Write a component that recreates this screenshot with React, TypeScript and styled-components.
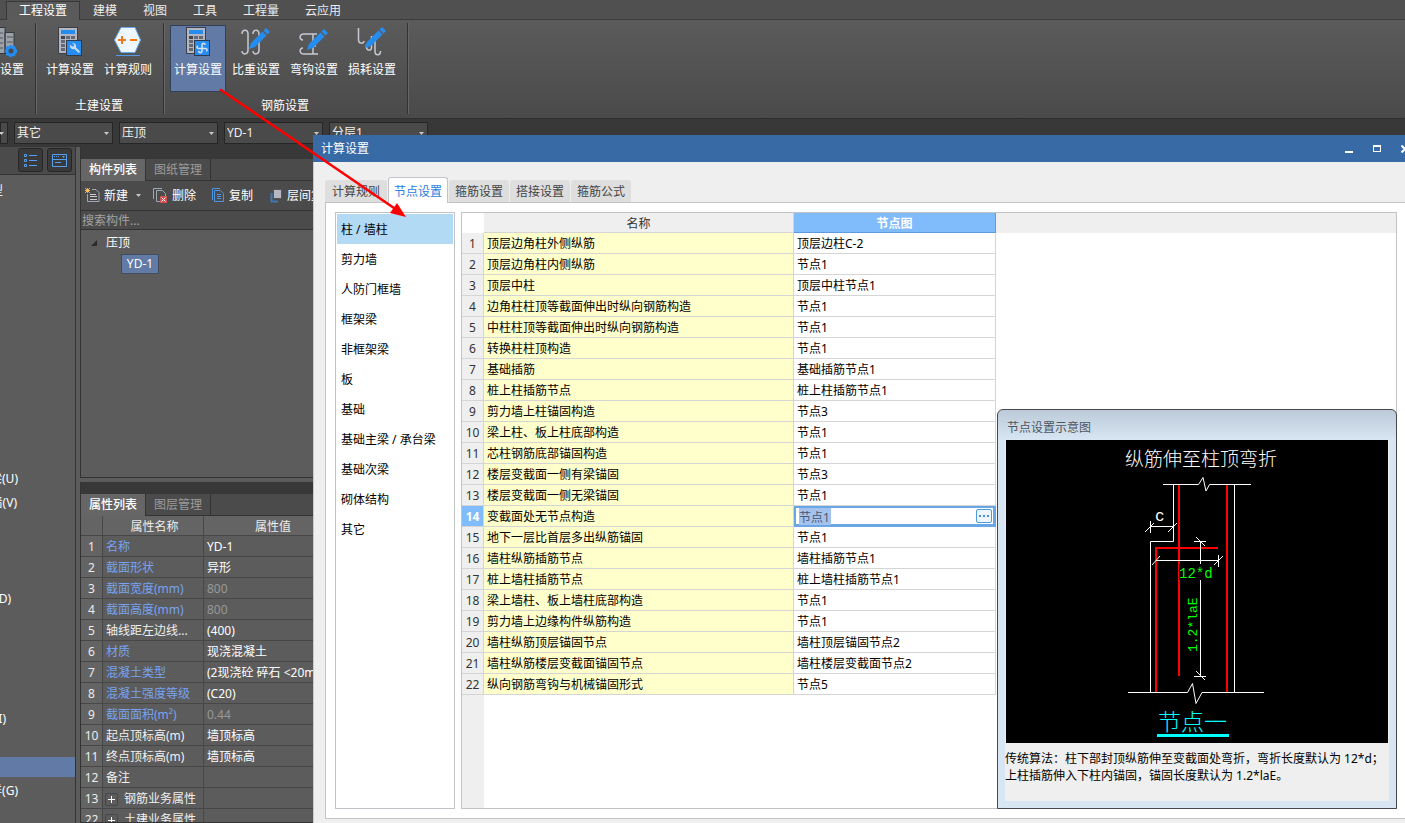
import React from "react";
import styled, { createGlobalStyle, css } from "styled-components";

const GlobalStyle = createGlobalStyle`
  *, *::before, *::after { box-sizing: border-box; }
  html, body, #root { height: 100%; }
  body {
    margin: 0;
    overflow: hidden;
    background: #3a3a3a;
    color: #fff;
    font: 12px/16px "Noto Sans", "Noto Sans CJK SC", sans-serif;
  }
  button, input, select { font: inherit; color: inherit; margin: 0; }
  button { border: 0; padding: 0; background: none; white-space: nowrap; }
  svg { display: block; flex: none; }
`;

/* ---------- main window ---------- */

const Window = styled.div`
  position: relative;
  display: flex;
  flex-direction: column;
  height: 100vh;
  overflow: hidden;
`;

const MenuBar = styled.nav`
  display: flex;
  flex: none;
  height: 20px;
  padding-left: 6px;
  background: #505050;
  border-bottom: 1px solid #3c3c3c;
`;

const MenuTab = styled.button<{ $active?: boolean }>`
  height: 20px;
  padding: 2px 13px 0;
  color: #ececec;
  ${(p) =>
    p.$active &&
    css`
      height: 19px;
      margin-top: 1px;
      padding: 0 12px;
      border: 1px solid #383838;
      border-bottom: 0;
      background: #5a5a5a;
      color: #fff;
    `}
`;

const Ribbon = styled.section`
  display: flex;
  flex: none;
  height: 98px;
  background: linear-gradient(#5b5b5b, #4a4a4a);
`;

const Group = styled.div<{ $clipped?: boolean }>`
  position: relative;
  display: flex;
  flex-direction: column;
  flex: none;
  justify-content: space-between;
  width: ${(p) => (p.$clipped ? "37px" : "auto")};
  padding: 5px 9px 4px 5px;
  ${(p) => p.$clipped && "align-items: flex-end; padding-right: 12px;"}
  &::after {
    content: "";
    position: absolute;
    right: 0;
    top: 3px;
    bottom: 4px;
    width: 2px;
    background: #333;
    border-right: 1px solid #666;
  }
`;

const GroupTools = styled.div`
  display: flex;
  gap: 2px;
`;

const GroupTitle = styled.div`
  text-align: center;
  height: 16px;
`;

const ToolButton = styled.button<{ $active?: boolean }>`
  display: flex;
  flex-direction: column;
  align-items: center;
  gap: 4px;
  width: 56px;
  height: 67px;
  border: 1px solid ${(p) => (p.$active ? "#33405a" : "transparent")};
  background: ${(p) => (p.$active ? "#627aa6" : "none")};
`;

const ClippedTool = styled(ToolButton)`
  align-items: flex-end;
  width: auto;
`;

const FilterBar = styled.div`
  display: flex;
  flex: none;
  gap: 6px;
  height: 29px;
  padding: 3px 0;
  background: #383838;
  border-top: 1px solid #2e2e2e;
`;

const Combo = styled.div<{ $stub?: boolean }>`
  position: relative;
  width: ${(p) => (p.$stub ? "8px" : "99px")};
  height: 22px;
  overflow: hidden;
  select {
    appearance: none;
    width: 100%;
    height: 22px;
    padding: 0 2px;
    border: 1px solid #262626;
    border-radius: 0;
    background: #4a4a4a;
    color: #f0f0f0;
  }
  svg {
    position: absolute;
    right: 4px;
    top: 10px;
    pointer-events: none;
  }
`;

const Workspace = styled.div`
  display: flex;
  flex: 1;
  min-height: 0;
`;

/* ---------- navigation column ---------- */

const Navigation = styled.aside`
  width: 76px;
  flex: none;
  overflow: hidden;
  background: #5c5c5c;
  border-right: 1px solid #333;
`;

const NavTools = styled.div`
  display: flex;
  justify-content: flex-end;
  gap: 4px;
  height: 28px;
  padding: 1px 3px;
  background: #4b4b4b;
  border-bottom: 1px solid #333;
`;

const NavTool = styled.button`
  display: grid;
  place-items: center;
  width: 25px;
  height: 24px;
  border: 1px solid #262626;
  border-radius: 3px;
  background: #3a3a3a;
`;

const NavList = styled.ul`
  margin: 0;
  padding: 4px 0;
  list-style: none;
`;

const NavItem = styled.li<{ $active?: boolean }>`
  height: 24px;
  padding: 2px 0;
  button {
    display: block;
    width: 100%;
    height: 20px;
    background: ${(p) => (p.$active ? "#627aa6" : "none")};
  }
`;

const NavText = styled.span<{ $end: number }>`
  display: flex;
  justify-content: flex-end;
  width: ${(p) => p.$end}px;
`;

/* ---------- component and property panels ---------- */

const Panels = styled.div`
  display: flex;
  flex-direction: column;
  width: 268px;
  flex: none;
  padding-left: 4px;
  background: #5c5c5c;
`;

const Panel = styled.section<{ $height?: number }>`
  display: flex;
  flex-direction: column;
  flex: ${(p) => (p.$height ? `0 0 ${p.$height}px` : "1")};
  min-height: 0;
  padding-top: 12px;
  border-left: 1px solid #333;
  border-bottom: 1px solid #333;
  background: #383838;
  overflow: hidden;
`;

const PanelGap = styled.div`
  height: 4px;
  flex: none;
`;

const PanelTabs = styled.div`
  display: flex;
  flex: none;
  height: 22px;
  background: #4b4b4b;
  border-bottom: 1px solid #333;
`;

const PanelTab = styled.button<{ $active?: boolean }>`
  width: 65px;
  height: 22px;
  border-right: 1px solid #333;
  color: #9b9b9b;
  ${(p) => p.$active && "background: #666; color: #fff; font-weight: 500;"}
`;

const PanelTools = styled.div`
  display: flex;
  flex: none;
  align-items: center;
  height: 30px;
  padding-left: 4px;
  background: #4b4b4b;
  border-bottom: 1px solid #333;
`;

const PanelTool = styled.button<{ $width: number }>`
  display: flex;
  align-items: center;
  flex: none;
  gap: 4px;
  width: ${(p) => p.$width}px;
  svg:last-child:not(:first-child) { margin-left: 4px; }
`;

const Search = styled.input`
  flex: none;
  width: 100%;
  height: 19px;
  padding: 0 1px;
  border: 0;
  border-bottom: 1px solid #333;
  background: #4b4b4b;
  &::placeholder { color: #a2a2a2; }
`;

const Tree = styled.div`
  flex: 1;
  padding: 2px 0 0 10px;
  background: #5c5c5c;
`;

const TreeRow = styled.div`
  display: flex;
  align-items: center;
  gap: 9px;
  height: 21px;
`;

const TreeLeaf = styled.button`
  width: 38px;
  height: 20px;
  margin-left: 30px;
  border: 1px solid #444c5c;
  background: #627aa6;
`;

const PropertyTable = styled.table`
  flex: none;
  width: 259px;
  table-layout: fixed;
  border-spacing: 0;
  background: #5c5c5c;
  tr { height: 21px; }
  th, td {
    height: 21px;
    padding: 2px 0 0 3px;
    border-right: 1px solid #474747;
    border-bottom: 1px solid #474747;
    font-weight: 400;
    text-align: left;
    white-space: nowrap;
    overflow: hidden;
    line-height: 16px;
  }
  thead th { height: 20px; text-align: center; background: #646464; color: #ececec; }
  thead tr { height: 20px; }
  tbody th { padding: 2px 0 0; text-align: center; background: #646464; color: #ececec; }
`;

const PropertyName = styled.td<{ $link?: boolean }>`
  color: ${(p) => (p.$link ? "#77a3f0" : "#f0f0f0")};
`;

const PropertyValue = styled.td<{ $muted?: boolean }>`
  color: ${(p) => (p.$muted ? "#989898" : "#fff")};
`;

const GroupCell = styled.div`
  display: flex;
  align-items: center;
  gap: 6px;
`;

const Expand = styled.button`
  display: grid;
  place-items: center;
  width: 13px;
  height: 13px;
  margin-left: -1px;
  border: 1px solid #474747;
  border-radius: 2px;
`;

/* ---------- dialog ---------- */

const Dialog = styled.section`
  position: absolute;
  top: 135px;
  left: 313px;
  right: 0;
  bottom: 0;
  display: flex;
  flex-direction: column;
  overflow: hidden;
  background: #efefef;
  color: #000;
`;

const TitleBar = styled.header`
  display: flex;
  flex: none;
  align-items: center;
  height: 27px;
  padding-left: 8px;
  background: #386aa5;
  color: #fff;
`;

const WindowButtons = styled.div`
  display: flex;
  margin: 0 -14px 0 auto;
  button { display: grid; place-items: center; width: 28px; height: 27px; }
`;

const DialogBody = styled.div`
  display: flex;
  flex: 1;
  flex-direction: column;
  min-height: 0;
  padding: 15px 0 4px 11px;
  border-left: 1px solid #c3cad3;
`;

const DialogTabs = styled.div`
  display: flex;
  flex: none;
  align-items: flex-end;
  gap: 1px;
  height: 26px;
  margin-bottom: -1px;
`;

const DialogTab = styled.button<{ $active?: boolean }>`
  width: 60px;
  height: 22px;
  margin-bottom: 1px;
  padding-top: 2px;
  border-radius: 3px 3px 0 0;
  background: #dedede;
  color: #444;
  &:first-child { width: 62px; }
  ${(p) =>
    p.$active &&
    css`
      position: relative;
      height: 26px;
      margin-bottom: 0;
      border: 1px solid #c1c3c9;
      border-bottom: 0;
      background: #fff;
      color: #2a7de1;
    `}
`;

const Page = styled.div`
  display: flex;
  flex: 1;
  gap: 6px;
  min-height: 0;
  padding: 9px 8px 9px 9px;
  border: 1px solid #c1c3c9;
  border-right: 0;
  background: #fff;
`;

const Categories = styled.ul`
  width: 120px;
  flex: none;
  margin: 0;
  padding: 1px;
  border: 1px solid #c1c3c9;
  list-style: none;
`;

const Category = styled.button<{ $active?: boolean }>`
  display: block;
  width: 100%;
  height: 30px;
  padding: 2px 0 0 4px;
  text-align: left;
  background: ${(p) => (p.$active ? "#b3daf5" : "none")};
`;

const Sheet = styled.div`
  position: relative;
  flex: 1;
  min-width: 0;
  border: 1px solid #c3c3c3;
  background:
    linear-gradient(#efefef, #efefef) 22px 0 / 100% 20px no-repeat,
    linear-gradient(#fff, #fff) 0 0 / 22px 20px no-repeat,
    linear-gradient(#efefef, #efefef) 0 0 / 22px 100% no-repeat,
    #fff;
`;

const NodeTable = styled.table`
  width: 534px;
  table-layout: fixed;
  border-spacing: 0;
  tr { height: 21px; }
  thead tr { height: 20px; }
  th, td {
    height: 21px;
    padding: 2px 3px 0;
    border-right: 1px solid #d5d5d5;
    border-bottom: 1px solid #d5d5d5;
    font-weight: 400;
    text-align: left;
    white-space: nowrap;
  }
  thead th { height: 20px; text-align: center; color: #333; }
  thead td { height: 20px; border: 0; }
`;

const ActiveHead = styled.th`
  && { background: #80bbfb; border-color: #5c9be0; color: #fff; font-weight: 700; }
`;

const RowNumber = styled.th<{ $active?: boolean }>`
  && {
    padding: 2px 0 0;
    text-align: center;
    color: ${(p) => (p.$active ? "#fff" : "#333")};
    font-weight: ${(p) => (p.$active ? 700 : 400)};
    background: ${(p) => (p.$active ? "#80bbfb" : "#efefef")};
  }
`;

const NodeName = styled.td`
  background: #ffffcc;
`;

const EditCell = styled.td`
  && { padding: 0 3px 0 5px; box-shadow: inset 0 0 0 2px #68a6e6; border-color: #68a6e6; }
`;

const EditLine = styled.div`
  display: flex;
  align-items: center;
  justify-content: space-between;
  input {
    width: 32px;
    height: 17px;
    padding: 1px 0 0;
    border: 0;
    outline: 0;
    background: #a4c2ee;
    color: #4c5870;
  }
  button {
    display: grid;
    place-items: center;
    width: 16px;
    height: 14px;
    border: 1px solid #4b9be3;
    border-radius: 2px;
    background: #eef5fc;
  }
`;

const Preview = styled.aside`
  position: absolute;
  right: -1px;
  bottom: -1px;
  display: flex;
  flex-direction: column;
  width: 400px;
  height: 400px;
  padding: 0 7px 7px;
  border: 1px solid #45494f;
  border-radius: 6px 6px 0 0;
  background: linear-gradient(#bccad9, #d8e5f2 30px);
`;

const PreviewTitle = styled.h2`
  flex: none;
  height: 30px;
  margin: 0;
  padding: 10px 2px 0;
  color: #4b5663;
  font: inherit;
`;

const PreviewBody = styled.div`
  flex: 1;
  background: #efefef;
  svg { margin-left: 1px; }
  p { margin: 7px 0 0; line-height: 17px; white-space: nowrap; }
`;

const Callout = styled.svg`
  position: absolute;
  left: 0;
  top: 0;
  pointer-events: none;
`;

/* ---------- icons ---------- */

const Caret = () => (
  <svg width="5" height="3" viewBox="0 0 5 3">
    <path d="M0 0h5L2.500 3z" fill="#c8c8c8" />
  </svg>
);

const Calculator = ({ children }: { children: React.ReactNode }) => (
  <svg width="32" height="32" viewBox="0 0 32 32">
    <rect x="4.500" y="1.500" width="19" height="26" fill="#b4b7c1" stroke="#3a3f49" />
    <rect x="7" y="4" width="14" height="4" fill="#258cf0" />
    <path d="M7 10h4v3H7z" fill="#3f444e" />
    <path d="M12 10h4v3h-4zM17 10h4v3h-4zM7 14h4v3H7zM7 18h4v3H7zM7 22h4v3H7z" fill="#646974" />
    <rect x="12.500" y="14.500" width="15" height="15" fill="#258cf0" stroke="#303a4a" />
    {children}
  </svg>
);

const CalcWrench = () => (
  <Calculator>
    <path d="M18 17a3.500 3.500 0 0 1 4 4.500l3.500 3.500c1 1-.5 2.500-1.500 1.500L20.500 23a3.500 3.500 0 0 1-4.500-4.500l2 2 1.800-.3.200-1.700z" fill="#c9daee" />
  </Calculator>
);

const CalcHook = () => (
  <Calculator>
    <path d="M23 19c0-2.500-3-2.500-3 0v5.500c0 3-3 2.500-3.500.5M16 20c-1.500.5-1.500 2.500.5 2.500h7c2 0 2 2.500.5 2.500" fill="none" stroke="#d3e1f3" strokeWidth="1.500" />
  </Calculator>
);

const Rules = () => (
  <svg width="32" height="32" viewBox="0 0 32 32">
    <path d="M9 1.500h14l5.500 12.500L23 26.500H9L2.500 14z" fill="#eef6ff" stroke="#69a9ee" />
    <path d="M6 14h8M10 10v8M18 14h7" stroke="#f07818" strokeWidth="2" />
    <path d="M4 29.500h24" stroke="#4e9bea" />
  </svg>
);

const Pencil = ({ x = 0, y = 0 }: { x?: number; y?: number }) => (
  <g transform={`translate(${x} ${y})`} fill="#258cf0">
    <path d="M0 22l2-6L13.500 4.500l4 4L6 20z" />
    <path d="M14.500 3.500L17 1l4 4-2.500 2.500z" />
  </g>
);

const Ratio = () => (
  <svg width="32" height="32" viewBox="0 0 32 32">
    <path d="M2 8c0-5 6-5 6 0v16c0 5-6 5-6 1M13 8c0-5 6-5 6 0v16c0 5-6 5-6 1" fill="none" stroke="#c6cad2" strokeWidth="1.500" />
    <Pencil x={9} y={1} />
  </svg>
);

const Hook = () => (
  <svg width="32" height="32" viewBox="0 0 32 32">
    <path d="M19 8H6c-5 0-5 6-1 6M19 28H6c-5 0-5-6-1-6M12 28h8M15 8v20M12 20h6" fill="none" stroke="#c6cad2" strokeWidth="1.500" />
    <Pencil x={9} y={2} />
  </svg>
);

const Loss = () => (
  <svg width="32" height="32" viewBox="0 0 32 32">
    <path d="M2.500 2v12c0 4 5.500 4 5.500 1M10.500 18v3c0 4 5 4 5 1V10M19 15v10c0 5 5.500 5 5.500 0" fill="none" stroke="#c6cad2" strokeWidth="1.500" />
    <Pencil x={9} y={0} />
  </svg>
);

const BuildingGear = () => (
  <svg width="24" height="32" viewBox="2 0 24 32">
    <path d="M0 1.500h7v26H0zM7 6.500h9v21H7z" fill="#9da1aa" stroke="#343840" />
    <path d="M0 7h5M0 12h5M0 17h5M0 22h5M9 11h6M9 16h6" stroke="#50555e" />
    <circle cx="13" cy="25" r="4" fill="#4a4a4a" stroke="#258cf0" strokeWidth="3" />
    <circle cx="13" cy="25" r="5.500" fill="none" stroke="#258cf0" strokeWidth="1.500" strokeDasharray="2 2" />
  </svg>
);

const ListIcon = () => (
  <svg width="13" height="13" viewBox="0 0 13 13" fill="none" stroke="#55a0f0">
    <path d="M.5.500h2v2h-2zM.5 5.500h2v2h-2zM.5 10.500h2v2h-2zM5 1.500h8M5 6.500h8M5 11.500h8" />
  </svg>
);

const FormIcon = () => (
  <svg width="15" height="13" viewBox="0 0 15 13" fill="none" stroke="#55a0f0">
    <path d="M.5.500h14v12H.5zM.5 5.500h14M3 8.500h6M2 2.500h1M4 2.500h1M6 2.500h1" />
    <path d="M10 2h3l-1.500 2z" fill="#55a0f0" stroke="none" />
  </svg>
);

const NewIcon = () => (
  <svg width="15" height="15" viewBox="0 0 15 15" fill="none">
    <path d="M7 1.500h4l3 3v9H2.500V6" stroke="#9da8b4" />
    <path d="M5 6.500h6M5 8.500h7M5 11.500h7" stroke="#c9ccd0" />
    <path d="M0 .5h5M0 2.500h5M0 4.500h5M2.500 0v5" stroke="#f2a83a" strokeDasharray="1 1" />
    <path d="M1 1h3v3H1z" fill="#f8c060" />
  </svg>
);

const DeleteIcon = () => (
  <svg width="15" height="15" viewBox="0 0 15 15" fill="none">
    <path d="M.5 11V.5H9M3.500 13.500v-11h6l3 3V8M3.500 13.500H7" stroke="#9da8b4" />
    <path d="M7 8h7v7H7z" fill="#d05050" />
    <path d="M8.500 9.500l4 4M12.500 9.500l-4 4" stroke="#fff" />
  </svg>
);

const CopyIcon = () => (
  <svg width="13" height="15" viewBox="0 0 13 15" fill="none" stroke="#4e94e0">
    <path d="M.5 12V.5H8M2.500 2.500h6l3 3v8h-9z" />
    <path d="M5 6.500h4M5 8.500h4M5 10.500h4" />
  </svg>
);

const LayerIcon = () => (
  <svg width="13" height="15" viewBox="0 0 13 15">
    <path d="M1.500 5v8.500H8" fill="none" stroke="#3c78b8" strokeWidth="2" />
    <path d="M3.500 1.500h8v9h-8z" fill="#b5b8c2" stroke="#555" />
  </svg>
);

/* ---------- node drawing ---------- */

const NodeDrawing = () => (
  <svg width="382" height="303" viewBox="0 0 382 303" role="img" aria-label="纵筋伸至柱顶弯折">
    <rect width="382" height="303" fill="#000" />
    <text x="119" y="26" fontSize="19" fontWeight="300" fill="#fff">纵筋伸至柱顶弯折</text>
    <g fill="none" stroke="#ff0000" strokeWidth="2">
      <path d="M173 44v192M221 44v208M150 252V108h62" />
    </g>
    <g fill="none" stroke="#fff">
      <path d="M157 44.500h35.500l4.500-7 3 13.500 3.500-6.500H245" />
      <path d="M167.500 44.500v57h-23v151M228.500 44.500v208" />
      <path d="M122 252.500h59.500l5-9 3.500 20 6-11h62" />
      <path d="M144.500 86.500h23M144.500 81v12M139 92l9-9M162 92l9-9" />
      <path d="M150 120.500h63M212.500 115v12M146 125l8-9M208 125l9-9" />
      <path d="M194.500 101v23M194.500 140v96M188 101.500h12M190 97l9 9M188 236.500h12M190 231l9 9" />
    </g>
    <rect x="173" y="124" width="33" height="16" fill="#000" />
    <g fontFamily="Liberation Mono, monospace" fontSize="14" fill="#00ff00">
      <text x="173" y="138">12*d</text>
      <text transform="translate(191 212) rotate(-90)" fontSize="13">1.2*laE</text>
      <text x="149" y="81" fontSize="16" fill="#fff">c</text>
    </g>
    <text x="152" y="290" fontSize="23" fontWeight="300" fill="#00ffff">节点一</text>
    <rect x="151" y="294" width="72" height="3" fill="#00ffff" />
  </svg>
);

/* ---------- data ---------- */

const menus = ["工程设置", "建模", "视图", "工具", "工程量", "云应用"];

const navLabels: Record<number, [string, number]> = {
  0: ["型", 3],
  12: ["梁(U)", 18],
  13: ["墙(V)", 17],
  17: ["(D)", 11],
  22: ["(I)", 6],
  24: ["", 0],
  25: ["洋(G)", 18],
};

type Property = { no: number; name: string; value?: string; link?: boolean; muted?: boolean; group?: boolean };

const properties: Property[] = [
  { no: 1, name: "名称", value: "YD-1", link: true },
  { no: 2, name: "截面形状", value: "异形", link: true },
  { no: 3, name: "截面宽度(mm)", value: "800", link: true, muted: true },
  { no: 4, name: "截面高度(mm)", value: "800", link: true, muted: true },
  { no: 5, name: "轴线距左边线...", value: "(400)" },
  { no: 6, name: "材质", value: "现浇混凝土", link: true },
  { no: 7, name: "混凝土类型", value: "(2现浇砼 碎石 <20mm)", link: true },
  { no: 8, name: "混凝土强度等级", value: "(C20)", link: true },
  { no: 9, name: "截面面积(m²)", value: "0.44", link: true, muted: true },
  { no: 10, name: "起点顶标高(m)", value: "墙顶标高" },
  { no: 11, name: "终点顶标高(m)", value: "墙顶标高" },
  { no: 12, name: "备注" },
  { no: 13, name: "钢筋业务属性", group: true },
  { no: 22, name: "土建业务属性", group: true },
];

const dialogTabs = ["计算规则", "节点设置", "箍筋设置", "搭接设置", "箍筋公式"];

const categories = [
  "柱 / 墙柱", "剪力墙", "人防门框墙", "框架梁", "非框架梁", "板",
  "基础", "基础主梁 / 承台梁", "基础次梁", "砌体结构", "其它",
];

const nodes: [string, string][] = [
  ["顶层边角柱外侧纵筋", "顶层边柱C-2"],
  ["顶层边角柱内侧纵筋", "节点1"],
  ["顶层中柱", "顶层中柱节点1"],
  ["边角柱柱顶等截面伸出时纵向钢筋构造", "节点1"],
  ["中柱柱顶等截面伸出时纵向钢筋构造", "节点1"],
  ["转换柱柱顶构造", "节点1"],
  ["基础插筋", "基础插筋节点1"],
  ["桩上柱插筋节点", "桩上柱插筋节点1"],
  ["剪力墙上柱锚固构造", "节点3"],
  ["梁上柱、板上柱底部构造", "节点1"],
  ["芯柱钢筋底部锚固构造", "节点1"],
  ["楼层变截面一侧有梁锚固", "节点3"],
  ["楼层变截面一侧无梁锚固", "节点1"],
  ["变截面处无节点构造", "节点1"],
  ["地下一层比首层多出纵筋锚固", "节点1"],
  ["墙柱纵筋插筋节点", "墙柱插筋节点1"],
  ["桩上墙柱插筋节点", "桩上墙柱插筋节点1"],
  ["梁上墙柱、板上墙柱底部构造", "节点1"],
  ["剪力墙上边缘构件纵筋构造", "节点1"],
  ["墙柱纵筋顶层锚固节点", "墙柱顶层锚固节点2"],
  ["墙柱纵筋楼层变截面锚固节点", "墙柱楼层变截面节点2"],
  ["纵向钢筋弯钩与机械锚固形式", "节点5"],
];

const ACTIVE_ROW = 13;

function Filter({ label, value, stub }: { label: string; value: string; stub?: boolean }) {
  return (
    <Combo $stub={stub}>
      <select aria-label={label} defaultValue={value}>
        <option>{value}</option>
      </select>
      <Caret />
    </Combo>
  );
}

function SettingsDialog() {
  return (
    <Dialog role="dialog" aria-label="计算设置">
      <TitleBar>
        计算设置
        <WindowButtons>
          <button aria-label="最小化">
            <svg width="8" height="8" viewBox="0 0 8 8"><path d="M0 6h8v2H0z" fill="#fff" /></svg>
          </button>
          <button aria-label="最大化">
            <svg width="8" height="8" viewBox="0 0 8 8"><path d="M0 0h8v7H0zM1 2v4h6V2z" fill="#fff" fillRule="evenodd" /></svg>
          </button>
          <button aria-label="关闭">
            <svg width="8" height="8" viewBox="0 0 8 8"><path d="M.5.500l7 7M7.500.5l-7 7" stroke="#fff" strokeWidth="2" /></svg>
          </button>
        </WindowButtons>
      </TitleBar>
      <DialogBody>
        <DialogTabs role="tablist">
          {dialogTabs.map((t, i) => (
            <DialogTab key={t} role="tab" aria-selected={i === 1} $active={i === 1}>{t}</DialogTab>
          ))}
        </DialogTabs>
        <Page>
          <Categories>
            {categories.map((c, i) => (
              <li key={c}><Category $active={i === 0}>{c}</Category></li>
            ))}
          </Categories>
          <Sheet>
            <NodeTable>
              <colgroup>
                <col style={{ width: 22 }} />
                <col style={{ width: 310 }} />
                <col style={{ width: 202 }} />
              </colgroup>
              <thead>
                <tr>
                  <td />
                  <th scope="col">名称</th>
                  <ActiveHead scope="col">节点图</ActiveHead>
                </tr>
              </thead>
              <tbody>
                {nodes.map(([name, value], i) => (
                  <tr key={name}>
                    <RowNumber scope="row" $active={i === ACTIVE_ROW}>{i + 1}</RowNumber>
                    <NodeName>{name}</NodeName>
                    {i === ACTIVE_ROW ? (
                      <EditCell>
                        <EditLine>
                          <input aria-label={name} defaultValue={value} />
                          <button aria-label="选择节点">
                            <svg width="10" height="2" viewBox="0 0 10 2"><path d="M0 0h2v2H0zM4 0h2v2H4zM8 0h2v2H8z" fill="#3f8fdc" /></svg>
                          </button>
                        </EditLine>
                      </EditCell>
                    ) : (
                      <td>{value}</td>
                    )}
                  </tr>
                ))}
              </tbody>
            </NodeTable>
            <Preview>
              <PreviewTitle>节点设置示意图</PreviewTitle>
              <PreviewBody>
                <NodeDrawing />
                <p>
                  传统算法：柱下部封顶纵筋伸至变截面处弯折，弯折长度默认为 12*d；
                  <br />
                  上柱插筋伸入下柱内锚固，锚固长度默认为 1.2*laE。
                </p>
              </PreviewBody>
            </Preview>
          </Sheet>
        </Page>
      </DialogBody>
    </Dialog>
  );
}

export default function App() {
  return (
    <Window>
      <GlobalStyle />
      <MenuBar>
        {menus.map((m, i) => (
          <MenuTab key={m} $active={i === 0}>{m}</MenuTab>
        ))}
      </MenuBar>
      <Ribbon>
        <Group $clipped>
          <ClippedTool><BuildingGear />设置</ClippedTool>
        </Group>
        <Group>
          <GroupTools>
            <ToolButton><CalcWrench />计算设置</ToolButton>
            <ToolButton><Rules />计算规则</ToolButton>
          </GroupTools>
          <GroupTitle>土建设置</GroupTitle>
        </Group>
        <Group>
          <GroupTools>
            <ToolButton $active><CalcHook />计算设置</ToolButton>
            <ToolButton><Ratio />比重设置</ToolButton>
            <ToolButton><Hook />弯钩设置</ToolButton>
            <ToolButton><Loss />损耗设置</ToolButton>
          </GroupTools>
          <GroupTitle>钢筋设置</GroupTitle>
        </Group>
      </Ribbon>
      <FilterBar>
        <Filter label="楼层" value="" stub />
        <Filter label="构件类别" value="其它" />
        <Filter label="构件类型" value="压顶" />
        <Filter label="构件" value="YD-1" />
        <Filter label="分层" value="分层1" />
      </FilterBar>
      <Workspace>
        <Navigation>
          <NavTools>
            <NavTool aria-label="列表"><ListIcon /></NavTool>
            <NavTool aria-label="窗体"><FormIcon /></NavTool>
          </NavTools>
          <NavList>
            {Array.from({ length: 27 }, (_, i) => {
              const label = navLabels[i];
              return (
                <NavItem key={i} $active={i === 24}>
                  {label && <button aria-label={label[0] || "当前构件"}><NavText $end={label[1]}>{label[0]}</NavText></button>}
                </NavItem>
              );
            })}
          </NavList>
        </Navigation>
        <Panels>
          <Panel $height={331}>
            <PanelTabs>
              <PanelTab $active>构件列表</PanelTab>
              <PanelTab>图纸管理</PanelTab>
            </PanelTabs>
            <PanelTools>
              <PanelTool $width={68}><NewIcon />新建<Caret /></PanelTool>
              <PanelTool $width={59}><DeleteIcon />删除</PanelTool>
              <PanelTool $width={58}><CopyIcon />复制</PanelTool>
              <PanelTool $width={66}><LayerIcon />层间复制</PanelTool>
            </PanelTools>
            <Search aria-label="搜索构件" placeholder="搜索构件..." />
            <Tree>
              <TreeRow>
                <svg width="6" height="6" viewBox="0 0 6 6"><path d="M6 0v6H0z" fill="#2b2b2b" /></svg>
                压顶
              </TreeRow>
              <TreeRow><TreeLeaf>YD-1</TreeLeaf></TreeRow>
            </Tree>
          </Panel>
          <PanelGap />
          <Panel>
            <PanelTabs>
              <PanelTab $active>属性列表</PanelTab>
              <PanelTab>图层管理</PanelTab>
            </PanelTabs>
            <PropertyTable>
              <colgroup>
                <col style={{ width: 22 }} />
                <col style={{ width: 101 }} />
                <col style={{ width: 136 }} />
              </colgroup>
              <thead>
                <tr>
                  <th />
                  <th scope="col">属性名称</th>
                  <th scope="col">属性值</th>
                </tr>
              </thead>
              <tbody>
                {properties.map((p) => (
                  <tr key={p.no}>
                    <th scope="row">{p.no}</th>
                    <PropertyName $link={p.link}>
                      {p.group ? (
                        <GroupCell>
                          <Expand aria-label={`展开${p.name}`}>
                            <svg width="7" height="7" viewBox="0 0 7 7"><path d="M0 3.500h7M3.500 0v7" stroke="#fff" /></svg>
                          </Expand>
                          {p.name}
                        </GroupCell>
                      ) : (
                        p.name
                      )}
                    </PropertyName>
                    <PropertyValue $muted={p.muted}>{p.value}</PropertyValue>
                  </tr>
                ))}
              </tbody>
            </PropertyTable>
          </Panel>
        </Panels>
      </Workspace>
      <SettingsDialog />
      <Callout width="420" height="230" viewBox="0 0 420 230" aria-hidden="true">
        <path d="M221 90l173 118" stroke="#ff0000" strokeWidth="2.500" strokeLinecap="round" />
        <path d="M406 217l-16-4 7-10z" fill="#ff0000" />
      </Callout>
    </Window>
  );
}
